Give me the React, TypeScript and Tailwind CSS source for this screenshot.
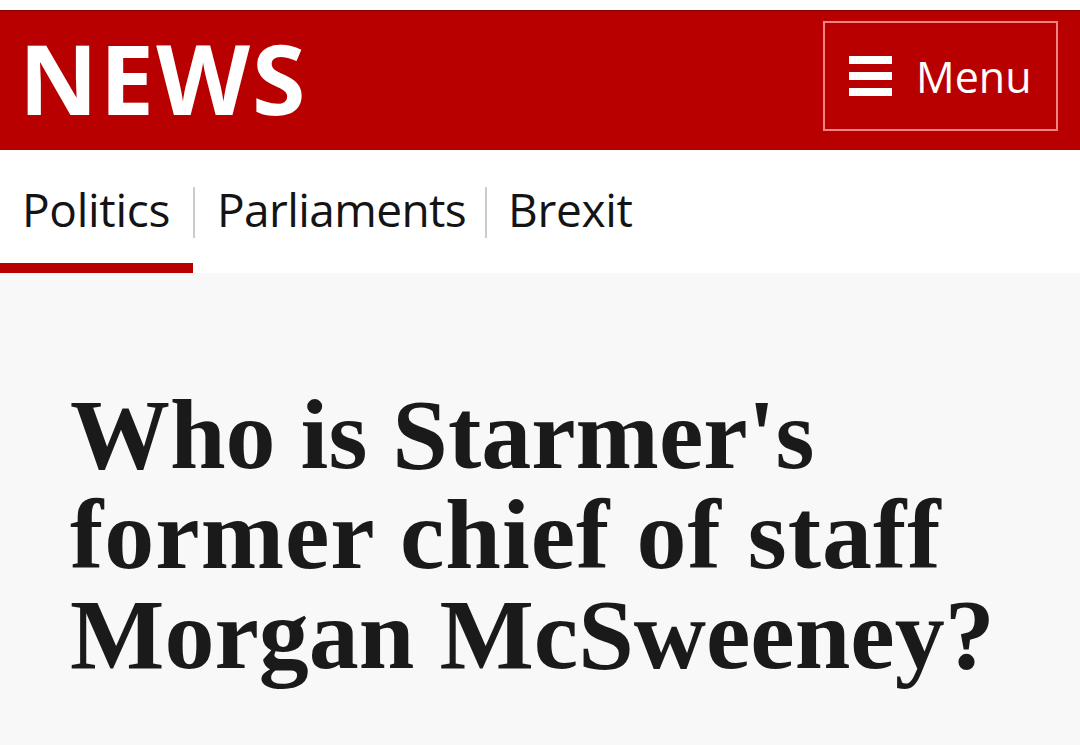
import React from "react";

export default function App() {
  return (
    <div className="min-h-[745px] w-[1080px] bg-[#f8f8f8] overflow-hidden">
      <div className="h-[10px] bg-white" />
      <header className="h-[140px] bg-[#b80000] flex items-start justify-between border-t border-[#8f0000]">
        <div
          className="pl-[19px] pt-[18px] text-white font-bold text-[97px] leading-none tracking-[2px]"
          style={{ fontFamily: '"Open Sans", sans-serif' }}
        >
          NEWS
        </div>
        <div className="mr-[22px] mt-[10px] w-[235px] h-[110px] border-2 border-[#f48484] flex items-center pl-[24px]">
          <div className="flex flex-col gap-[8px] w-[43px]">
            <div className="h-[8px] bg-white" />
            <div className="h-[8px] bg-white" />
            <div className="h-[8px] bg-white" />
          </div>
          <span
            className="ml-[24px] text-white text-[43px] leading-none"
            style={{ fontFamily: '"Open Sans", sans-serif' }}
          >
            Menu
          </span>
        </div>
      </header>
      <nav
        className="h-[123px] bg-white flex items-start"
        style={{ fontFamily: '"Open Sans", sans-serif' }}
      >
        <div className="relative h-full w-[193px] pl-[22px] pt-[36px]">
          <span className="text-[46px] leading-none text-[#141414] tracking-[-0.3px]">Politics</span>
          <div className="absolute left-0 right-0 bottom-0 h-[10px] bg-[#b80000]" />
        </div>
        <div className="w-[2px] h-[51px] mt-[37px] bg-[#cccccc]" />
        <div className="h-full w-[290px] pl-[22px] pt-[36px]">
          <span className="text-[46px] leading-none text-[#141414] tracking-[-0.6px]">Parliaments</span>
        </div>
        <div className="w-[2px] h-[51px] mt-[37px] bg-[#cccccc]" />
        <div className="h-full pl-[21px] pt-[36px]">
          <span className="text-[46px] leading-none text-[#141414] tracking-[-0.3px]">Brexit</span>
        </div>
      </nav>
      <main className="pl-[70px] pt-[112px]">
        <h1
          className="text-[100px] leading-[100px] font-bold text-[#1a1a1a]"
          style={{ fontFamily: '"Liberation Serif", serif' }}
        >
          <span className="block whitespace-nowrap">Who is Starmer's</span>
          <span className="block whitespace-nowrap tracking-[1px]">former chief of staff</span>
          <span className="block whitespace-nowrap">Morgan McSweeney?</span>
        </h1>
      </main>
    </div>
  );
}
